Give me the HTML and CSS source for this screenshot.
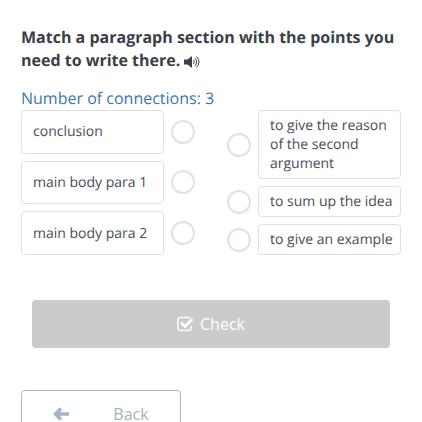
FILE: index.html
```html
<!DOCTYPE html>
<html lang="en">
<head>
    <meta charset="UTF-8">
    <meta name="viewport" content="width=device-width, initial-scale=1.0">
    <title>Match the sections</title>
    <link rel="stylesheet" href="styles.css">
</head>
<body>
    <main class="task">
        <h1>Match a paragraph section with the points you need to write there.
            <button type="button" class="listen" aria-label="Listen">
                <svg viewBox="0 0 16 14" width="16" height="14">
                    <path d="M0 4.500h3.500L8 1v12L3.500 9.500H0z" fill="#3a3f47"/>
                    <path d="M9.500 5q1.500 2 0 4M11 3.200q3.200 3.800 0 7.600M12.500 1.500q5 5.500 0 11" fill="none" stroke="#3a3f47" stroke-width="1"/>
                </svg>
            </button>
        </h1>
        <p class="count">Number of connections: 3</p>

        <form class="match">
            <div class="column left">
                <div class="item">
                    <label for="left1">conclusion</label>
                    <input type="radio" name="left" id="left1">
                </div>
                <div class="item">
                    <label for="left2">main body para 1</label>
                    <input type="radio" name="left" id="left2">
                </div>
                <div class="item">
                    <label for="left3">main body para 2</label>
                    <input type="radio" name="left" id="left3">
                </div>
            </div>
            <div class="column right">
                <div class="item">
                    <input type="radio" name="right" id="right1">
                    <label for="right1">to give the reason of the second argument</label>
                </div>
                <div class="item">
                    <input type="radio" name="right" id="right2">
                    <label for="right2">to sum up the idea</label>
                </div>
                <div class="item">
                    <input type="radio" name="right" id="right3">
                    <label for="right3">to give an example</label>
                </div>
            </div>
        </form>

        <button type="button" class="check">
            <svg viewBox="0 0 17 16" width="17" height="16" fill="none" stroke="#fff">
                <path d="M13 2.200Q12.500 1.500 11.500 1.500H3.500Q1 1.500 1 4v8q0 2.500 2.500 2.500h8Q14 14.500 14 12V9.500" stroke-width="1.500"/>
                <path d="M4 6.500l4 4 7.500-7.500" stroke-width="2.800"/>
            </svg>
            <span>Check</span>
        </button>

        <button type="button" class="back">
            <svg viewBox="0 0 16 14" width="16" height="14">
                <path d="M8 1.500L2.500 7 8 12.500M3 7h13" fill="none" stroke="#a3b5c1" stroke-width="3.600"/>
            </svg>
            <span>Back</span>
        </button>
    </main>
</body>
</html>
```
FILE: styles.css
```css
* {
    box-sizing: border-box;
}
body {
    margin: 0;
    font-family: "Open Sans", "Noto Sans", sans-serif;
    font-size: 14px;
    text-rendering: geometricPrecision;
    background: #fff;
    color: #484d57;
}
button {
    font-family: inherit;
    font-size: 16px;
    cursor: pointer;
}
.task {
    padding: 26px 21px 0;
}
h1 {
    margin: 0 0 15px;
    font-size: 16px;
    line-height: 23px;
    font-weight: bold;
    color: #3a3f47;
}
.listen {
    padding: 0;
    border: none;
    background: none;
    vertical-align: middle;
}
.listen svg {
    display: block;
}
.count {
    margin: 0;
    font-size: 16px;
    line-height: 23px;
    color: #3a78a8;
}
.match {
    display: flex;
    justify-content: space-between;
    gap: 32px;
}
.column {
    flex: 1;
    display: grid;
    gap: 7px;
}
.left {
    grid-auto-rows: 1fr;
}
.item {
    display: flex;
    align-items: center;
    gap: 7px;
}
.item label {
    flex: 1;
    align-self: stretch;
    display: flex;
    align-items: center;
    padding: 5px 6px 5px 11px;
    border: 1px solid #e0e0e0;
    border-radius: 4px;
    line-height: 19px;
}
.item input {
    appearance: none;
    flex: none;
    width: 24px;
    height: 24px;
    margin: 0;
    border: 2px solid #e2e2e2;
    border-radius: 50%;
}
.item input:checked {
    border-color: #3a78a8;
}
.check {
    display: flex;
    align-items: center;
    justify-content: center;
    gap: 6px;
    width: calc(100% - 22px);
    height: 48px;
    margin: 45px auto 42px;
    border: none;
    border-radius: 4px;
    background: #cbcbcb;
    color: #fff;
}
.back {
    display: flex;
    align-items: center;
    justify-content: space-between;
    width: 42%;
    height: 48px;
    padding: 0 31px;
    border: 1px solid #a9b9be;
    border-radius: 4px;
    background: #fff;
    color: #a8b3ba;
}
```
